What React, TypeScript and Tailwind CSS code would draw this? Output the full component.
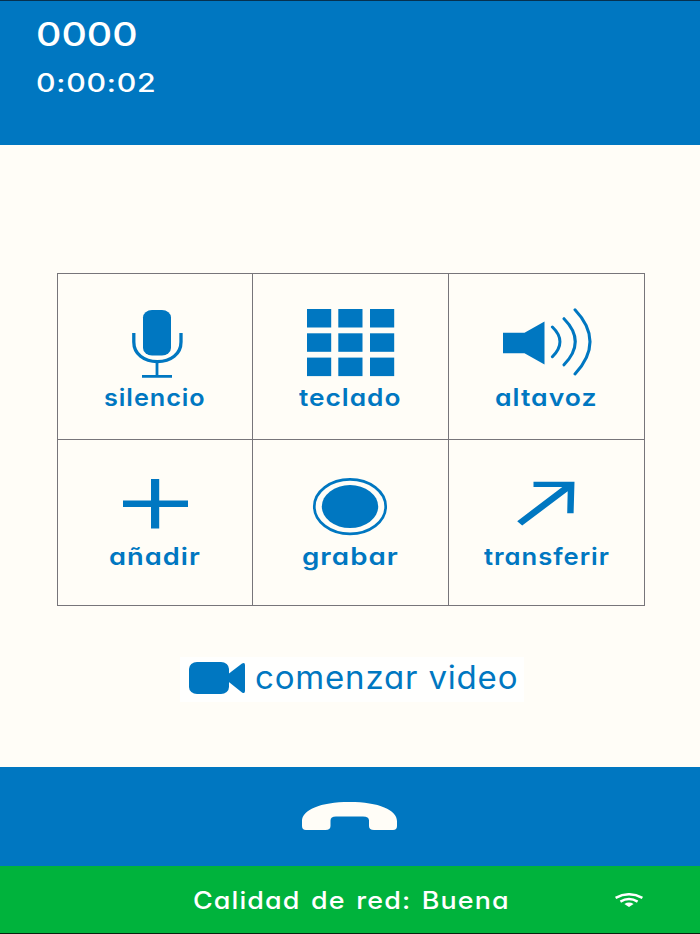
import { useLayoutEffect, useRef, useState } from "react";
import type { ReactNode } from "react";

/* Text stretched horizontally to fill exactly the width of its container. */
function WideText({ children, className }: { children: string; className: string }) {
  const box = useRef<HTMLDivElement>(null);
  const text = useRef<HTMLSpanElement>(null);
  const [scale, setScale] = useState(1);
  useLayoutEffect(() => {
    if (box.current && text.current) {
      setScale(box.current.offsetWidth / text.current.offsetWidth);
    }
  }, [children]);
  return (
    <div
      ref={box}
      className={`shrink-0 whitespace-nowrap font-['Inter',sans-serif] [font-feature-settings:'cv11'] ${className}`}
    >
      <span ref={text} className="inline-block origin-left" style={{ transform: `scaleX(${scale})` }}>
        {children}
      </span>
    </div>
  );
}

function Cell({ icon, label, width }: { icon: ReactNode; label: string; width: string }) {
  return (
    <button className="flex flex-col items-center bg-[#fffdf7] text-[#0077c1]">
      {icon}
      <WideText className={`h-[28px] text-left text-[24px] leading-[28px] font-semibold tracking-[0.9px] ${width}`}>
        {label}
      </WideText>
    </button>
  );
}

const MicIcon = () => (
  <svg className="mt-[34px] mb-1.5 h-[70px] w-[100px]" viewBox="0 0 100 70" fill="none" stroke="currentColor">
    <rect x="38" y="2" width="28" height="45.5" rx="9" ry="7.5" fill="currentColor" stroke="none" />
    <path d="M28.8 25V34C28.8 46 39 53.6 52.4 53.6S76 46 76 34V25" strokeWidth="3.3" />
    <path d="M52 53V68M37 68.3H67" strokeWidth="2.8" />
  </svg>
);

const KeypadIcon = () => (
  <svg className="mt-[34px] mb-1.5 h-[70px] w-[101px]" viewBox="0 0 101 70" fill="currentColor">
    {[1, 25.3, 49.6].map((y) =>
      [7, 38.3, 70].map((x) => <rect key={`${x}-${y}`} x={x} y={y} width="24.2" height="18.5" />),
    )}
  </svg>
);

const SpeakerIcon = () => (
  <svg className="mt-[34px] mb-1.5 h-[70px] w-[101px]" viewBox="0 0 101 70" fill="none" stroke="currentColor" strokeWidth="3" strokeLinecap="round">
    <path d="M7 24.7H28.5L48.5 13.5V56.5L28.5 45.2H7Z" fill="currentColor" stroke="none" />
    <path d="M56.4 19Q71.5 33.5 56.4 48.7M68 10.7Q90.5 33.5 68 56.8M79 1.8Q109 33.5 79 66" />
  </svg>
);

const PlusIcon = () => (
  <svg className="mt-9 mb-[7px] h-[60px] w-[100px]" viewBox="0 0 100 60" fill="currentColor">
    <path d="M46 3H54.2V24.5H83V31H54.2V52.5H46V31H18V24.5H46Z" />
  </svg>
);

const RecordIcon = () => (
  <svg className="mt-9 mb-[7px] h-[60px] w-[101px]" viewBox="0 0 101 60">
    <ellipse cx="50" cy="30.6" rx="35.7" ry="27.2" fill="none" stroke="currentColor" strokeWidth="2.7" />
    <ellipse cx="50" cy="30.6" rx="28.2" ry="21.5" fill="currentColor" />
  </svg>
);

const ArrowIcon = () => (
  <svg className="mt-9 mb-[7px] h-[60px] w-[101px]" viewBox="0 0 101 60" fill="currentColor">
    <path d="M37.5 5.8H78.5L77.6 37.3H71.2L71.7 15.3L26.2 49.5L21.2 45.2L66.3 10.9H37.5Z" />
  </svg>
);

const VideoIcon = () => (
  <svg className="h-8 w-14 shrink-0 text-[#0077c1]" viewBox="0 0 56 32" fill="currentColor">
    <rect x="0" y="0" width="40" height="32" rx="8" ry="7" />
    <path d="M38 13L53 1.5Q56 0 56 3V29Q56 32 53 30.5L38 18.5Z" />
  </svg>
);

const HangUpIcon = () => (
  <svg className="mr-px h-7 w-[95px] text-[#fffdf7]" viewBox="0 0 95 28" fill="currentColor">
    <path d="M0 19C0 8 18 0 47.5 0S95 8 95 19V24Q95 28 91 28H72Q67 28 67 24V18.5Q67 14.6 61 14.6H34Q28.5 14.6 28.5 18.5V24Q28.5 28 23.5 28H4Q0 28 0 24Z" />
  </svg>
);

const WifiIcon = () => (
  <svg className="h-[14px] w-7 text-white" viewBox="0 0 28 14" fill="none" stroke="currentColor" strokeWidth="2.5">
    <path d="M.6 4.8Q14-2.3 27.4 4.8M5.4 8.6Q14 3.6 22.6 8.6" />
    <path d="M9.4 10.9Q14 8.3 18.6 10.9L14 14Z" fill="currentColor" stroke="none" />
  </svg>
);

export default function App() {
  return (
    <main className="flex h-[934px] w-[700px] flex-col overflow-hidden bg-[#fffdf7]">
      <header className="flex h-[145px] shrink-0 flex-col border-t border-[#06314f] bg-[#0077c1] pl-[36px] text-white">
        <WideText className="mt-[19px] h-[30px] w-[102px] text-[32px] leading-[30px] font-medium">0000</WideText>
        <WideText className="mt-[18px] h-[30px] w-[120px] text-[25px] leading-[30px] font-medium tracking-[0.6px]">0:00:02</WideText>
      </header>

      <section className="mt-32 ml-[57px] grid h-[333px] w-[588px] shrink-0 grid-cols-[194px_195px_195px] grid-rows-[165px_165px] gap-px bg-[#77757a] p-px">
        <Cell icon={<MicIcon />} label="silencio" width="w-[102px]" />
        <Cell icon={<KeypadIcon />} label="teclado" width="w-[103px]" />
        <Cell icon={<SpeakerIcon />} label="altavoz" width="w-[103px]" />
        <Cell icon={<PlusIcon />} label="añadir" width="w-[92px]" />
        <Cell icon={<RecordIcon />} label="grabar" width="w-[97px]" />
        <Cell icon={<ArrowIcon />} label="transferir" width="w-[126px]" />
      </section>

      <button className="mt-[51px] ml-[180px] flex h-[45px] w-[344px] shrink-0 items-start bg-[#fffffe] pt-[5px] pl-[9px]">
        <VideoIcon />
        <WideText className="ml-[10px] h-[31px] w-[263px] text-left text-[32px] leading-[31px] tracking-[0.8px] text-[#0077c1]">
          comenzar video
        </WideText>
      </button>

      <button className="mt-[65px] flex h-[98.5px] shrink-0 items-start justify-center bg-[#0077c1] pt-[35px]">
        <HangUpIcon />
      </button>

      <footer className="flex h-[68.5px] shrink-0 items-start border-b border-[#06240f] bg-[#00b33c] pl-[193px] text-white">
        <WideText className="mt-[20px] h-[30px] w-[317px] text-[24px] leading-[30px] font-medium tracking-[1px] [word-spacing:2px]">
          Calidad de red: Buena
        </WideText>
        <div className="mt-[27px] ml-[104.5px]">
          <WifiIcon />
        </div>
      </footer>
    </main>
  );
}
